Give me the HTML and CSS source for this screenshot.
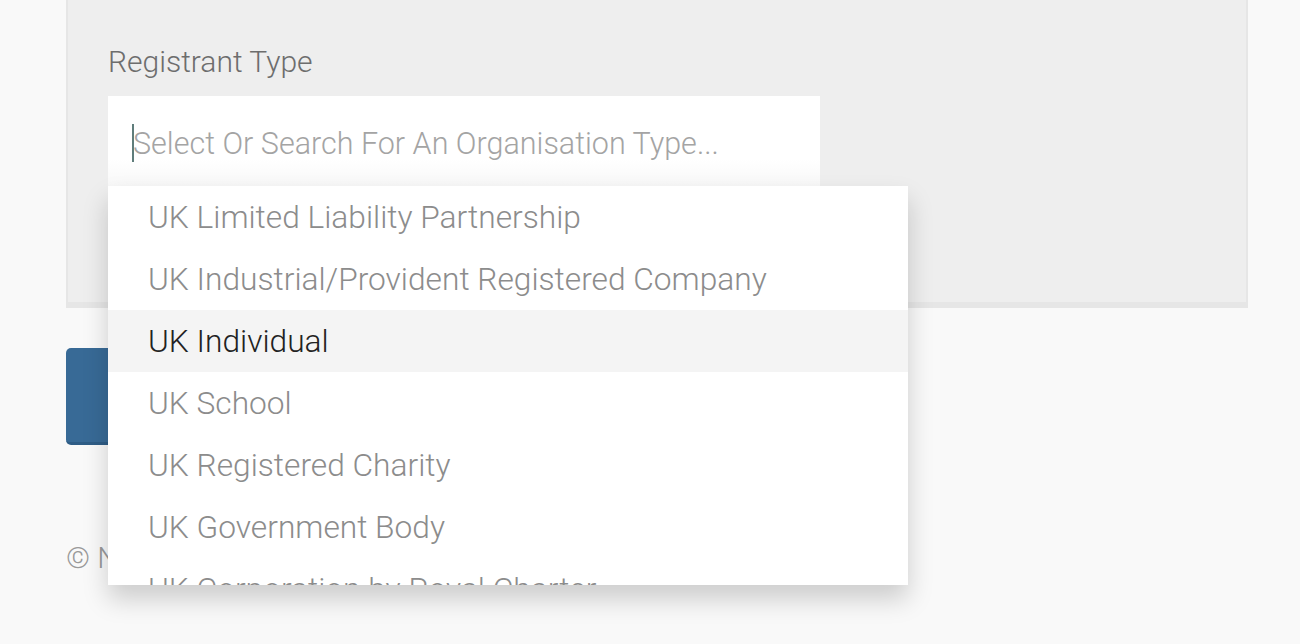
FILE: index.html
```html
<!DOCTYPE html>
<html lang="en">
<head>
<meta charset="utf-8">
<title>Registrant Type</title>
<link rel="stylesheet" href="styles.css">
</head>
<body>
<div class="page">
  <section class="panel">
    <label class="field-label">Registrant Type</label>
    <div class="select">
      <div class="select-input"><span class="caret"></span><span class="placeholder">Select Or Search For An Organisation Type...</span></div>
      <ul class="options">
        <li class="option">UK Limited Liability Partnership</li>
        <li class="option">UK Industrial/Provident Registered Company</li>
        <li class="option active">UK Individual</li>
        <li class="option">UK School</li>
        <li class="option">UK Registered Charity</li>
        <li class="option">UK Government Body</li>
        <li class="option">UK Corporation by Royal Charter</li>
      </ul>
    </div>
  </section>
  <button class="submit" type="button">Continue</button>
  <footer class="footer">© Nominet</footer>
</div>
</body>
</html>
```
FILE: styles.css
```css
html {
  overflow: hidden;
  height: 100%;
}
body {
  margin: 0;
  padding: 0;
  min-height: 100%;
  background: #f9f9f9;
  font-family: Roboto, "Liberation Sans", sans-serif;
  font-weight: 300;
}
.page {
  padding: 0 52px 0 66px;
  display: flex;
  flex-direction: column;
  align-items: flex-start;
}
.panel {
  box-sizing: border-box;
  width: 1182px;
  height: 308px;
  background: #eeeeee;
  border: 2px solid #e6e6e6;
  border-top: 0;
  border-bottom-width: 6px;
  padding: 45px 40px 0 40px;
  display: flex;
  flex-direction: column;
  align-items: flex-start;
}
.field-label {
  font-size: 30px;
  line-height: 34px;
  color: #6d6d6d;
  margin-bottom: 17px;
}
.select {
  position: relative;
  width: 712px;
}
.select-input {
  box-sizing: border-box;
  height: 90px;
  background: linear-gradient(#ffffff 0, #ffffff 70%, #f8f8f8 100%);
  padding: 4px 0 0 24px;
  display: flex;
  align-items: center;
  font-size: 30.5px;
  color: #a4a4a4;
}
.caret {
  display: inline-block;
  width: 2px;
  height: 38px;
  background: #5f7d7b;
  margin-right: -1px;
}
.placeholder {
  white-space: nowrap;
}
.options {
  position: absolute;
  left: 0;
  top: 90px;
  width: 800px;
  height: 399px;
  margin: 0;
  padding: 0;
  list-style: none;
  background: #ffffff;
  overflow: hidden;
  box-shadow: 0 14px 24px rgba(0, 0, 0, 0.18);
  z-index: 2;
}
.option {
  height: 61px;
  line-height: 61px;
  padding: 1px 0 0 40px;
  font-size: 31.7px;
  color: #8c8c8c;
  white-space: nowrap;
}
.option.active {
  background: #f4f4f4;
  color: #222222;
}
.submit {
  margin-top: 40px;
  width: 260px;
  height: 97px;
  border: 0;
  border-bottom: 3px solid #2f5d86;
  border-radius: 5px;
  background: #386a96;
  color: #ffffff;
  font-family: inherit;
  font-size: 28px;
}
.footer {
  margin-top: 96px;
  font-size: 30px;
  line-height: 34px;
  color: #9a9a9a;
}
```
